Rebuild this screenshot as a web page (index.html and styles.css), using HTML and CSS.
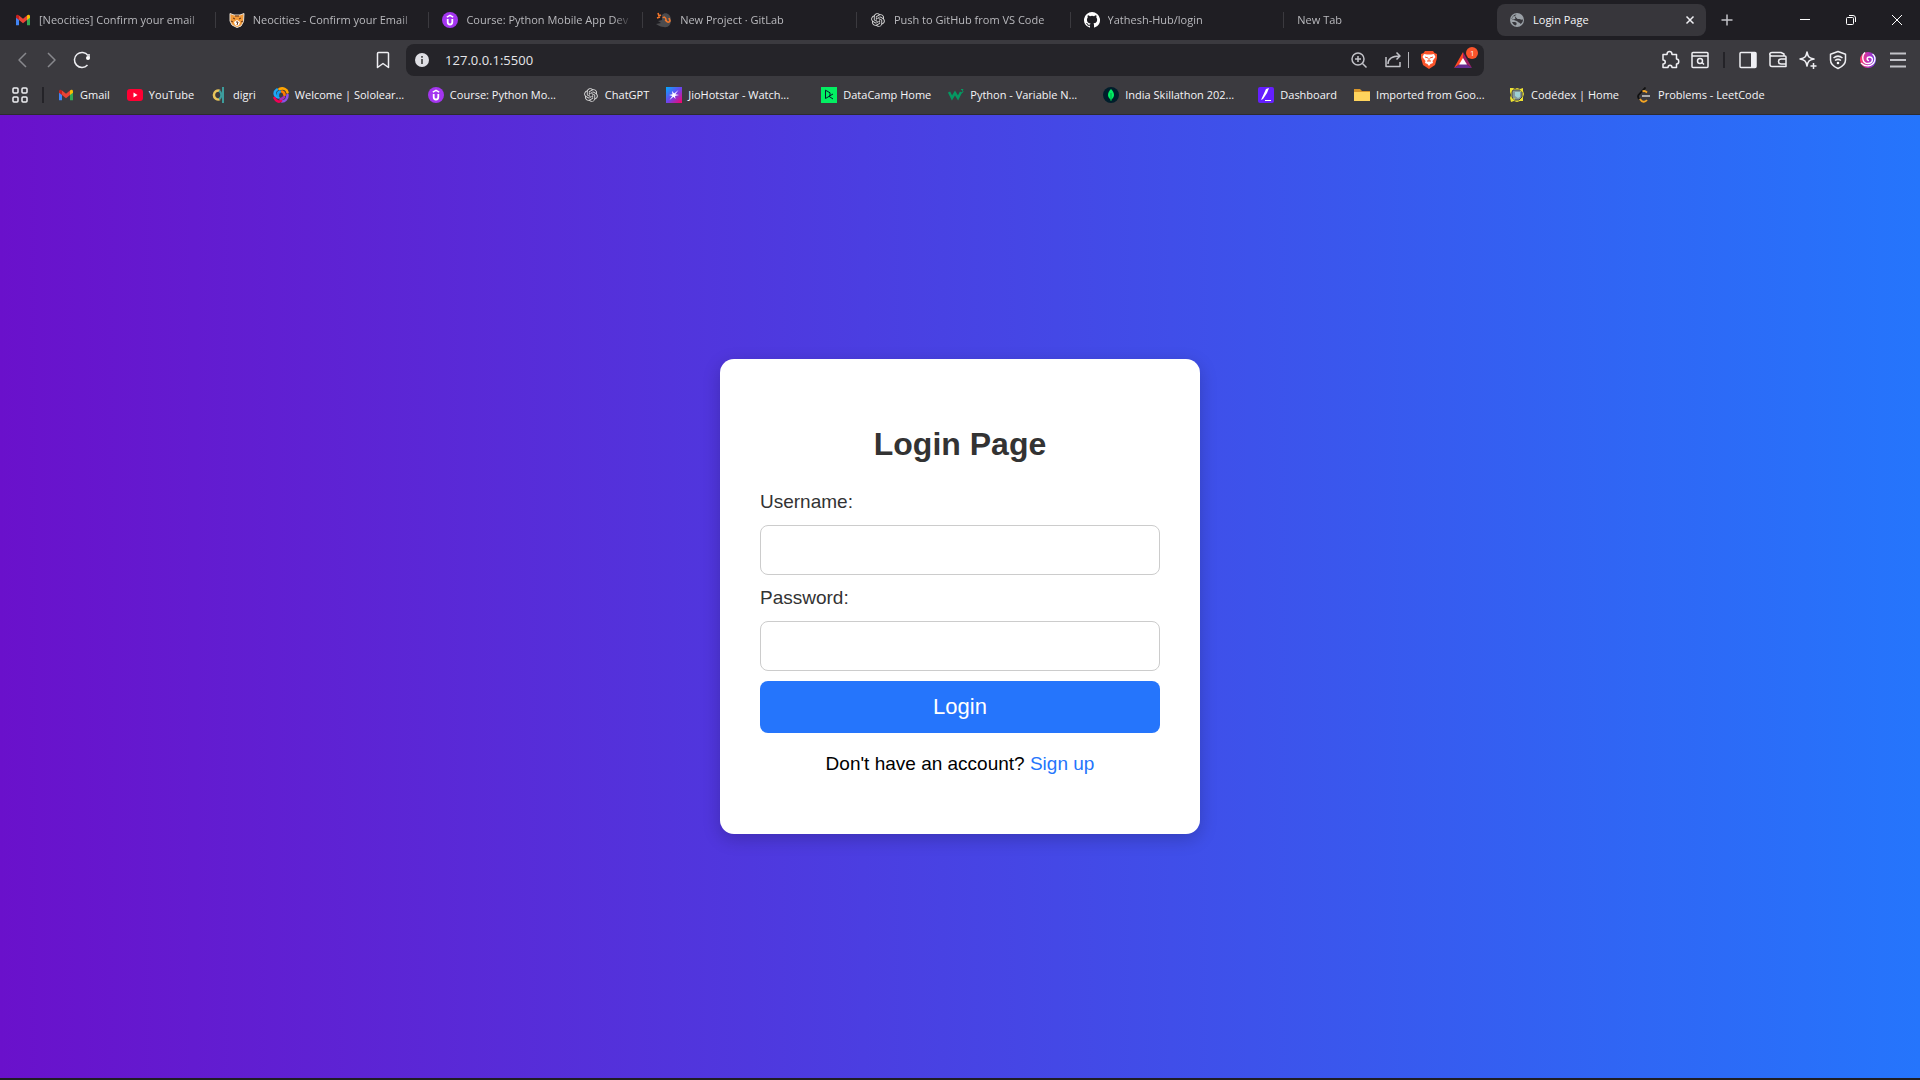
FILE: index.html
```html
<!DOCTYPE html>
<html lang="en">
<head>
<meta charset="utf-8">
<title>Login Page</title>
<link rel="stylesheet" href="styles.css">
</head>
<body>
<svg class="defs" aria-hidden="true">
  <symbol id="gmail" viewBox="0 0 16 16"><path fill="#4285f4" d="M1 4v9.200h3V7L1 4z"/><path fill="#34a853" d="M12 7v6.200h3V4z"/><path fill="#ea4335" d="M4 3.500 8 6.700l4-3.200V8l-4 3.200L4 8z"/><path fill="#c5221f" d="M1 4.200C1 2.500 3 2.200 4 3.400V8L1 5.700z"/><path fill="#fbbc04" d="M15 4.200c0-1.700-2-2-3-.8V8l3-2.300z"/></symbol>
  <symbol id="udemy" viewBox="0 0 16 16"><circle cx="8" cy="8" r="8" fill="#a435f0"/><path fill="none" stroke="#fff" stroke-width="1.800" d="M5.700 7v3a2.300 2.500 0 0 0 4.600 0V7"/><path fill="none" stroke="#fff" stroke-width="1.400" d="M4.800 5.200 8 3.400l3.200 1.800"/></symbol>
  <symbol id="openai" viewBox="-2 -2 28 28"><path fill="#dcdcdc" d="M22.2819 9.8211a5.9847 5.9847 0 0 0-.5157-4.9108 6.0462 6.0462 0 0 0-6.5098-2.9A6.0651 6.0651 0 0 0 4.9807 4.1818a5.9847 5.9847 0 0 0-3.9977 2.9 6.0462 6.0462 0 0 0 .7427 7.0966 5.98 5.98 0 0 0 .511 4.9107 6.051 6.051 0 0 0 6.5146 2.9001A5.9847 5.9847 0 0 0 13.2599 24a6.0557 6.0557 0 0 0 5.7718-4.2058 5.9894 5.9894 0 0 0 3.9977-2.9001 6.0557 6.0557 0 0 0-.7475-7.0729zm-9.022 12.6081a4.4755 4.4755 0 0 1-2.8764-1.0408l.1419-.0804 4.7783-2.7582a.7948.7948 0 0 0 .3927-.6813v-6.7369l2.02 1.1686a.071.071 0 0 1 .038.052v5.5826a4.504 4.504 0 0 1-4.4945 4.4944zm-9.6607-4.1254a4.4708 4.4708 0 0 1-.5346-3.0137l.142.0852 4.783 2.7582a.7712.7712 0 0 0 .7806 0l5.8428-3.3685v2.3324a.0804.0804 0 0 1-.0332.0615L9.74 19.9502a4.4992 4.4992 0 0 1-6.1408-1.6464zM2.3408 7.8956a4.485 4.485 0 0 1 2.3655-1.9728V11.6a.7664.7664 0 0 0 .3879.6765l5.8144 3.3543-2.0201 1.1685a.0757.0757 0 0 1-.071 0l-4.8303-2.7865A4.504 4.504 0 0 1 2.3408 7.872zm16.5963 3.8558L13.1038 8.364 15.1192 7.2a.0757.0757 0 0 1 .071 0l4.8303 2.7913a4.4944 4.4944 0 0 1-.6765 8.1042v-5.6772a.79.79 0 0 0-.407-.667zm2.0107-3.0231l-.142-.0852-4.7735-2.7818a.7759.7759 0 0 0-.7854 0L9.409 9.2297V6.8974a.0662.0662 0 0 1 .0284-.0615l4.8303-2.7866a4.4992 4.4992 0 0 1 6.6802 4.66zM8.3065 12.863l-2.02-1.1638a.0804.0804 0 0 1-.038-.0567V6.0742a4.4992 4.4992 0 0 1 7.3757-3.4537l-.142.0805L8.704 5.459a.7948.7948 0 0 0-.3927.6813zm1.0976-2.3654l2.602-1.4998 2.6069 1.4998v2.9994l-2.5974 1.4997-2.6067-1.4997Z"/></symbol>
</svg>
<header class="browser">
  <nav class="tabs" aria-label="Tabs">
    <a class="tab" href="#"><svg class="ic"><use href="#gmail"/></svg><span>[Neocities] Confirm your email</span></a>
    <a class="tab" href="#"><svg class="ic" viewBox="0 0 16 16"><path fill="#f29a38" stroke="#e8dfd3" d="M1 1.500 5 3h6l4-1.500-.5 8L12 14l-4 1.500L3 13 1 9z"/><path fill="#fff" d="m5 10 3-2 3 2-1 3-2 1-2-1z"/><path stroke="#613117" d="m4 6 2 1M12 6l-2 1M7 3v2M9 3v2M7 10h2l-1 3M2 9l2 1M14 9l-2 1" fill="none"/></svg><span>Neocities - Confirm your Email</span></a>
    <a class="tab" href="#"><svg class="ic"><use href="#udemy"/></svg><span>Course: Python Mobile App Dev</span></a>
    <a class="tab" href="#"><svg class="ic" viewBox="0 0 16 16"><path fill="#4b4b4e" d="M6 3c3-4 9-1 9 5 0 5-3 8-7 7-3 0-5-1-8-3l5-1-3-2 4-1z"/><path fill="none" stroke="#f1762b" stroke-width="1.600" d="m2 1 1 3 2-1M1 6l3-1M7 6c1-2 3 0 3 2s3 3 4 1l-1-3M9 8l2 1"/></svg><span>New Project · GitLab</span></a>
    <a class="tab" href="#"><svg class="ic"><use href="#openai"/></svg><span>Push to GitHub from VS Code</span></a>
    <a class="tab" href="#"><svg class="ic" viewBox="0 0 16 16"><path fill="#fff" d="M8 0a8 8 0 0 0-2.530 15.590c.4.070.55-.170.55-.380v-1.490c-2.010.370-2.530-.490-2.690-.940-.090-.230-.480-.940-.820-1.130-.280-.150-.680-.520-.010-.530.630-.010 1.080.580 1.230.820.720 1.210 1.870.870 2.330.660.070-.520.280-.870.510-1.070-1.780-.2-3.640-.890-3.640-3.950 0-.870.310-1.590.820-2.150-.080-.2-.360-1.020.080-2.120 0 0 .670-.210 2.200.820a7.500 7.500 0 0 1 4 0c1.530-1.040 2.200-.820 2.200-.820.440 1.100.160 1.920.080 2.120.510.560.820 1.270.820 2.150 0 3.070-1.870 3.750-3.650 3.950.290.250.540.730.540 1.480v2.200c0 .210.150.460.550.380A8 8 0 0 0 8 0z"/></svg><span>Yathesh-Hub/login</span></a>
    <a class="tab last" href="#"><span>New Tab</span></a>
    <div class="tab active"><svg class="ic" viewBox="0 0 16 16"><circle cx="8" cy="8" r="7" fill="#9aa0a6"/><path fill="#37363b" d="M8 2.500C6 3 5.500 4.500 7 5.500s1 1.500 2.500 1.500S12 8 14 7.500c0 2-1 3.500-2.500 4.500-.5-1.500-1.500-1-2.500-2S6.500 8.500 5 8 2.500 7 2.500 7C3 4.500 5 2.500 8 2.500z"/><path fill="#9aa0a6" d="M3.500 5C5 3.500 6 3.500 6 5s1 1.500 0 2-2 .5-3 0z"/><path fill="#37363b" d="M3 10c1.500 0 4-.5 4.500 1S7 13 6.500 13.500C5 13 3.500 11.500 3 10z"/></svg><span>Login Page</span><button aria-label="Close tab"><svg class="ic" viewBox="0 0 16 16"><path class="line" d="m4.500 4.500 7 7m0-7-7 7"/></svg></button></div>
    <button class="new" aria-label="New tab"><svg class="ic" viewBox="0 0 16 16"><path class="line dim" d="M8 2.500v11M2.500 8h11"/></svg></button>
    <div class="window">
      <button aria-label="Minimize"><svg class="ic" viewBox="0 0 16 16"><path d="M3 7.500h10" class="line thin"/></svg></button>
      <button aria-label="Restore"><svg class="ic" viewBox="0 0 16 16"><path class="line thin" d="M4.500 5.500h5a1 1 0 0 1 1 1v5a1 1 0 0 1-1 1h-5a1 1 0 0 1-1-1v-5a1 1 0 0 1 1-1zM6 3.500h4a2.500 2.500 0 0 1 2.500 2.500v4"/></svg></button>
      <button aria-label="Close"><svg class="ic" viewBox="0 0 16 16"><path class="line thin" d="m3 3 10 10m0-10L3 13"/></svg></button>
    </div>
  </nav>
  <div class="toolbar">
    <button aria-label="Back"><svg viewBox="0 0 20 20"><path class="line faint" d="M14 3 7 10l7 7"/></svg></button>
    <button aria-label="Forward"><svg viewBox="0 0 20 20"><path class="line faint" d="m6 3 7 7-7 7"/></svg></button>
    <button aria-label="Reload"><svg viewBox="0 0 20 20"><path class="line" d="M15.500 15A7.500 7.500 0 1 1 16 5.500"/><circle cx="16" cy="8" r="2" fill="#fff"/><path class="line" d="M17 4v4"/></svg></button>
    <i class="space-left"></i>
    <button aria-label="Bookmark this tab"><svg viewBox="0 0 20 20"><path class="line" d="M4.500 3.500a1 1 0 0 1 1-1h9a1 1 0 0 1 1 1v14L10 13.500l-5.500 4z"/></svg></button>
    <div class="address">
      <svg class="ic" viewBox="0 0 16 16"><circle cx="8" cy="8" r="7" fill="#dfdfe4"/><path stroke="#444" stroke-width="1.700" d="M8 7v5M8 4v1.700"/></svg>
      <input aria-label="Address" value="127.0.0.1:5500">
      <button aria-label="Zoom"><svg viewBox="0 0 20 20"><g class="line dim"><circle cx="9" cy="9" r="6"/><path d="m13.500 13.500 4 4M6 9h6M9 6v6"/></g></svg></button>
      <button aria-label="Share"><svg viewBox="0 0 20 20"><path class="line dim" d="M3 7v9.500h14V12M5 14c0-5 3-8 12-8M13.500 2.500 17 6l-3.500 3.500"/></svg></button>
      <i class="divider"></i>
      <button aria-label="Brave Shields"><svg viewBox="0 0 20 20"><path fill="#fb542b" d="M6 1h8l1.500 2L18 4v4l-2 7-6 4-6-4-2-7V4l2.500-1z"/><path fill="#fff" d="m5 4 3 .5h4l3-.5 1.500 3-3 4 .5 2-2.500 1-1.500 2-1.500-2-2.500-1 .5-2-3-4z"/><path fill="none" stroke="#fb542b" d="m6 7 3 1M14 7l-3 1M10 8v3M8 11h4"/></svg></button>
      <button class="rewards" aria-label="Brave Rewards"><svg viewBox="0 0 20 20"><path fill="#ff4724" d="M10 2 1 18l9-6z"/><path fill="#9e1f63" d="m10 2 9 16-9-6z"/><path fill="#662d91" d="M1 18h18l-9-6z"/><path fill="#fff" d="m10 8-4 6.500h8z"/></svg><b>1</b></button>
    </div>
    <i class="space-right"></i>
    <button aria-label="Extensions"><svg viewBox="0 0 20 20"><path class="line" d="M3 4.500h4c0-4 5-4 5 0h4.500V9c3 0 3 5 0 5v3.500H12c0-3-4-3-4 0H3V14c3 0 3-4 0-4z"/></svg></button>
    <button aria-label="Search tabs"><svg viewBox="0 0 20 20"><g class="line"><rect x="2" y="2.500" width="16" height="15" rx="1"/><path d="M2 6h16m-6 6.500 2 2"/><circle cx="10" cy="11" r="2.500"/></g></svg></button>
    <i class="sep"></i>
    <button aria-label="Sidebar"><svg viewBox="0 0 20 20"><rect class="line" x="2" y="2.500" width="16" height="15" rx="1"/><path fill="#efeff3" d="M13 2h5v16h-5z"/></svg></button>
    <button aria-label="Wallet"><svg viewBox="0 0 20 20"><path class="line" d="M16 6V4L13 2.500H4C1 2.500 1 6 4 6h13a1 1 0 0 1 1 1v9.500H4a2 2 0 0 1-2-2V4m16 5h-5a2.500 2.500 0 0 0 0 5h5"/></svg></button>
    <button aria-label="Leo AI"><svg viewBox="0 0 20 20"><path class="line" d="M9 2c1 5 2 6 7 7-5 1-6 2-7 7-1-5-2-6-7-7 5-1 6-2 7-7z"/><path class="line" d="M15.500 13v6M12.500 16h6"/></svg></button>
    <button aria-label="VPN"><svg viewBox="0 0 20 20"><path class="line" d="m10 1.500 7.500 2.700V10c0 4-4 7-7.500 8.500C6.500 17 2.500 14 2.500 10V4.200zM5.500 8c3-2.500 6-2.500 9 0M7 10.500c2-1.500 4-1.500 6 0"/><circle cx="10" cy="13" r="1.300" fill="#fff"/></svg></button>
    <button aria-label="Profile"><svg viewBox="0 0 20 20"><defs><linearGradient id="swirl"><stop stop-color="#ff3b67"/><stop offset=".5" stop-color="#c032b8"/><stop offset="1" stop-color="#653ee4"/></linearGradient></defs><circle cx="10" cy="10" r="8" fill="url(#swirl)"/><path fill="none" stroke="#fff" stroke-width="1.400" d="M7 2.500C3.500 6 4 13.500 10 13.500c5 0 6-6.500 1.500-6.500-3 0-3 3.500-.5 3.500M3 13c4 4 11 4 13.500-1.500 1-3 0-6-2-7.500"/></svg></button>
    <button aria-label="Menu"><svg viewBox="0 0 20 20"><path class="line dim" stroke-width="2" d="M2 3.500h16M2 10h16M2 16.500h16"/></svg></button>
  </div>
  <nav class="bookmarks" aria-label="Bookmarks">
    <button aria-label="All apps"><svg class="ic" viewBox="0 0 16 16"><g class="line"><rect x="1" y="1" width="5" height="5" rx="1"/><rect x="10" y="1" width="5" height="5" rx="1"/><rect x="1" y="10" width="5" height="5" rx="1"/><rect x="10" y="10" width="5" height="5" rx="1"/></g></svg></button>
    <i class="sep"></i>
    <a href="#"><svg class="ic"><use href="#gmail"/></svg><span>Gmail</span></a>
    <a href="#"><svg class="ic" viewBox="0 0 16 16"><rect y="2" width="16" height="12" rx="3" fill="#ff0033"/><path fill="#fff" d="m6.500 5.500 4 2.500-4 2.500z"/></svg><span>YouTube</span></a>
    <a href="#"><svg class="ic" viewBox="0 0 16 16"><path fill="none" stroke="#e8c45a" stroke-width="2.500" d="M9 3.800a4.500 4.500 0 1 0 0 8.400"/><path fill="none" stroke="#3d9c9c" stroke-width="2" d="M12 0v16M8 4c3 1 3 7 0 8"/></svg><span>digri</span></a>
    <a class="long" href="#"><svg class="ic" viewBox="0 0 16 16"><g fill="none" stroke-width="2.600" stroke-linecap="round"><path stroke="#1fa8f5" d="M4 2.500C.5 5 1 9.500 5.500 10.500"/><path stroke="#ffa400" d="M6.500 2C10 .500 14 2 14.500 5.500"/><path stroke="#8b51e8" d="M14.500 8c0 4-2.500 6.500-5.500 6.500"/><path stroke="#f20055" d="M1.500 11c1.500 3 4 4.500 6.500 3"/><path stroke="#149df2" d="M7 4.500C5 5.500 4.500 7 5 8.500"/><path stroke="#ff7a00" d="M9 4.500c1.500.5 2.500 2 2.500 3.500"/><path stroke="#a42fb4" d="M11 10c-1 1.500-2 2-3.500 2"/></g></svg><span>Welcome | Sololear...</span></a>
    <a class="long" href="#"><svg class="ic"><use href="#udemy"/></svg><span>Course: Python Mo...</span></a>
    <a href="#"><svg class="ic"><use href="#openai"/></svg><span>ChatGPT</span></a>
    <a class="long" href="#"><svg class="ic" viewBox="0 0 16 16"><defs><linearGradient id="hot" x2="1" y2="1"><stop stop-color="#00aeff"/><stop offset=".5" stop-color="#6b45ef"/><stop offset="1" stop-color="#ff0065"/></linearGradient></defs><path fill="url(#hot)" d="M0 0h16v16H0z"/><path fill="#fff" d="m12.500 3-3.200 4.200 3.700.8-4 1 .5 3-2-2.300L3.500 13l2.800-4L3 8l3.500-.7L6 4l2.200 2.400z"/></svg><span>JioHotstar - Watch...</span></a>
    <a href="#"><svg class="ic" viewBox="0 0 16 16"><path fill="#03ef62" d="M0 0h16v16H0z"/><path fill="none" stroke="#05192d" d="M4.500 11.500V3.200L9 5.800v3L4.500 11.500M12 7 8 9.300l4 2.700"/></svg><span>DataCamp Home</span></a>
    <a class="long" href="#"><svg class="ic" viewBox="0 0 16 16"><path fill="none" stroke="#059862" stroke-width="2.500" d="m1 5 3 6 3-5 3 5 3-6"/><path fill="none" stroke="#059862" d="M13 2.500h2l-1 1.500c2 0 1 2-1 2"/></svg><span>Python - Variable N...</span></a>
    <a class="long" href="#"><svg class="ic" viewBox="0 0 16 16"><circle cx="8" cy="8" r="8" fill="#001e2b"/><path fill="#00ed64" d="M8 2c4 4 4 8 0 11-4-3-4-7 0-11z"/><path stroke="#00a746" d="M8 6v8"/></svg><span>India Skillathon 202...</span></a>
    <a href="#"><svg class="ic" viewBox="0 0 16 16"><rect width="16" height="16" rx="2" fill="#651fff"/><path fill="#fff" d="M11 1 8 2 3 13l2-1 4-6zM7 13h6v1H7z"/></svg><span>Dashboard</span></a>
    <a class="long" href="#"><svg class="ic" viewBox="0 0 16 16"><path fill="#d7952a" d="M0 2h6l2 2h8v10H0z"/><path fill="#ffd45d" d="M0 5h16v9H0z"/></svg><span>Imported from Goo...</span></a>
    <a href="#"><svg class="ic" viewBox="0 0 16 16"><path fill="#eee132" d="M1 1h3l2 1 2-1 3 1 3-1v3l1 3-1 3v4h-3l-3 1-3-1-3 1-1-4 1-3-1-3z"/><path fill="#87999b" stroke="#444" d="M4 3h7l2 2v5l-3 3H5l-2-3V5z"/><path fill="#9ed0d5" d="M6 5h5v5l-2 1-3-2z"/><path stroke="#eee132" d="M4 12h2M11 4h2"/></svg><span>Codédex | Home</span></a>
    <a href="#"><svg class="ic" viewBox="0 0 16 16"><g fill="none" stroke-width="1.800"><path stroke="#111" d="M9.500.5 2.500 8C1.500 9.500 2 10.500 3 12"/><path stroke="#f5a623" d="M6.500 4.500c2-1.200 3-.5 4.500 1M4 12c2 3.500 5 3.500 7 1"/><path stroke="#b8b8b8" d="M6 9h8"/></g></svg><span>Problems - LeetCode</span></a>
  </nav>
</header>
<main class="page">
  <form class="card">
    <h2>Login Page</h2>
    <label for="username">Username:</label>
    <input id="username" type="text">
    <label for="password">Password:</label>
    <input id="password" type="password">
    <button type="button">Login</button>
    <p>Don't have an account? <a href="#">Sign up</a></p>
  </form>
</main>
</body>
</html>
```

FILE: styles.css
```css
* { box-sizing: border-box; }
body {
  margin: 0;
  min-height: 100vh;
  display: flex;
  flex-direction: column;
  font-family: "Liberation Sans", Arial, sans-serif;
}
a { text-decoration: none; }
button { border: 0; padding: 0; background: none; font: inherit; color: inherit; }
.defs { position: absolute; width: 0; height: 0; }
.ic { width: 16px; height: 16px; flex: none; }
.line { fill: none; stroke: #efeff3; stroke-width: 1.5; stroke-linejoin: round; }
.line[stroke-width="2"] { stroke-width: 2; }
.dim { stroke: #c2c2c8; }
.faint { stroke: #88888d; }
.thin { stroke: #fff; stroke-width: 1; }

/* Browser chrome */
.browser {
  background: #3b3a3f;
  border-bottom: 1px solid #2c2b30;
  color: #f5f5f7;
  font: 11px/16px "Open Sans", "Noto Sans", sans-serif;
}
.browser button { display: flex; align-items: center; justify-content: center; flex: none; }
.browser a { color: inherit; }
.tabs { display: flex; align-items: center; height: 40px; padding-left: 2px; background: #1f1e23; }
.tab {
  flex: 1 1 0;
  min-width: 0;
  display: flex;
  align-items: center;
  gap: 8px;
  height: 16px;
  padding: 0 10px 0 13px;
  border-right: 1px solid #3b3a3f;
}
.tab span { flex: 1; overflow: hidden; white-space: nowrap; }
.browser a.tab { color: #b9b9bd; }
a.tab span { mask-image: linear-gradient(to right, #000 calc(100% - 18px), transparent); }
.tab.last { border-right: 0; }
.tab.active { flex: 0 0 209px; height: 32px; padding: 0 8px 0 12px; border: 0; border-radius: 8px; background: #37363b; }
.window { display: flex; margin-left: auto; }
.window button { width: 46px; height: 40px; }
.tabs .new { width: 42px; height: 32px; margin-right: 34px; }

.toolbar { display: flex; align-items: center; height: 40px; padding: 0 7px; }
.toolbar button { width: 30px; height: 30px; }
.toolbar button svg { width: 20px; height: 20px; }
.space-left { flex: 135; }
.space-right { flex: 85; }
.address {
  flex: 530;
  display: flex;
  align-items: center;
  height: 32px;
  margin-left: 8px;
  padding: 0 6px 0 8px;
  border-radius: 8px;
  background: #252429;
}
.address input {
  flex: 1;
  min-width: 0;
  margin-left: 15px;
  padding: 0;
  border: 0;
  background: none;
  color: #e6e6ea;
  font: 13px/20px "Open Sans", "Noto Sans", sans-serif;
}
.address button { margin-left: 4px; }
.divider { width: 1px; height: 16px; margin-right: 1px; background: #b4b4b9; }
.rewards { position: relative; }
.rewards b {
  position: absolute;
  top: 2px;
  right: 0;
  width: 12px;
  border-radius: 6px;
  background: #fb542b;
  font: 8px/12px "Open Sans", sans-serif;
}
.sep { width: 2px; height: 16px; margin: 0 8px; background: #242328; }

.bookmarks { display: flex; align-items: center; height: 34px; padding: 0 12px 4px; }
.bookmarks .sep { margin: 0 14px; }
.bookmarks a { display: flex; align-items: center; gap: 6px; margin-right: 17px; white-space: nowrap; }
.bookmarks .long span { width: 116px; }

/* Login page */
.page {
  flex: 1;
  display: flex;
  align-items: center;
  justify-content: center;
  background: linear-gradient(to right, #6a11cb, #2575fc);
  border-bottom: 2px solid #1f1e23;
}
.card {
  display: flex;
  flex-direction: column;
  width: 480px;
  padding: 67px 40px 59px;
  border-radius: 14px;
  background: #fff;
  box-shadow: 0 5px 18px rgba(0, 0, 0, .2);
  font-size: 19px;
  line-height: 22px;
}
.card h2 { margin: 0 0 29px; color: #333; font-size: 32px; line-height: 36px; text-align: center; }
.card label { color: #333; }
.card input { height: 50px; margin: 12px 0; padding: 0 12px; border: 1px solid #ccc; border-radius: 8px; background: #fff; font: inherit; }
.card input[type="password"] { margin-bottom: 10px; }
.card button { height: 52px; border-radius: 8px; background: #2575fc; color: #fff; font-size: 22px; }
.card p { margin: 20px 0 0; text-align: center; }
.card p a { color: #2575fc; }
```
